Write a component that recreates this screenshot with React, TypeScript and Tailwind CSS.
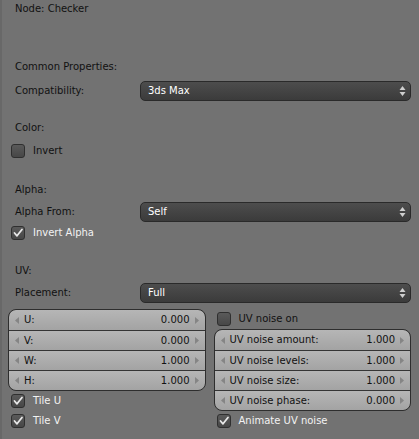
import React from "react";

const Check = ({ on }: { on: boolean }) => (
  <div className="w-[14px] h-[14px] rounded-[3px] border border-[#2f2f2f] bg-gradient-to-b from-[#5a5a5a] to-[#474747] flex items-center justify-center">
    {on && (
      <svg width="12" height="12" viewBox="0 0 12 12">
        <path d="M2.5 6 L5 8.8 L10 2.5" fill="none" stroke="#e8e8e8" strokeWidth="1.8" strokeLinecap="round" strokeLinejoin="round" />
      </svg>
    )}
  </div>
);

const Toggle = ({ label, on }: { label: string; on: boolean }) => (
  <div className="h-5 flex items-center gap-[8px] pl-[3px]">
    <Check on={on} />
    <span className={on ? "text-[#f2f2f2]" : "text-[#111]"}>{label}</span>
  </div>
);

const Label = ({ text }: { text: string }) => (
  <div className="h-5 flex items-center pl-[7px] text-[#111]">{text}</div>
);

const Dropdown = ({ label, value }: { label: string; value: string }) => (
  <div className="h-5 flex items-center">
    <div className="w-[132px] pl-[7px] text-[#111]">{label}</div>
    <div className="w-[271px] h-5 rounded-[5px] border border-[#2a2a2a] bg-gradient-to-b from-[#4d4d4d] to-[#3b3b3b] flex items-center justify-between pl-[7px] pr-[4px] text-white">
      <span>{value}</span>
      <svg width="7" height="12" viewBox="0 0 7 12">
        <path d="M3.5 1 L6.5 5 L0.5 5 Z" fill="#cfcfcf" />
        <path d="M3.5 11 L6.5 7 L0.5 7 Z" fill="#cfcfcf" />
      </svg>
    </div>
  </div>
);

const NumRow = ({ label, value, first, last }: { label: string; value: string; first?: boolean; last?: boolean }) => (
  <div
    className={`h-5 flex items-center bg-gradient-to-b from-[#b6b6b6] to-[#a3a3a3] text-[#111] pl-[6px] pr-[6px] ${
      first ? "rounded-t-[7px]" : "border-t border-[#353535]"
    } ${last ? "rounded-b-[7px]" : ""}`}
  >
    <svg width="4" height="7" viewBox="0 0 4 7" className="mr-[5px]">
      <path d="M4 0 L0 3.5 L4 7 Z" fill="#858585" />
    </svg>
    <span className="flex-1">{label}</span>
    <span>{value}</span>
    <svg width="4" height="7" viewBox="0 0 4 7" className="ml-[5px]">
      <path d="M0 0 L4 3.5 L0 7 Z" fill="#858585" />
    </svg>
  </div>
);

const NumGroup = ({ rows }: { rows: [string, string][] }) => (
  <div className="rounded-[8px] border border-[#2e2e2e] overflow-hidden">
    {rows.map(([l, v], i) => (
      <NumRow key={l} label={l} value={v} first={i === 0} last={i === rows.length - 1} />
    ))}
  </div>
);

export default function App() {
  return (
    <div
      className="w-[419px] h-[439px] bg-[#727272] border-l-2 border-[#686868] text-[10px] leading-none overflow-hidden"
      style={{ fontFamily: '"DejaVu Sans", sans-serif' }}
    >
      <div className="pl-[6px] pr-[8px]">
        <div className="h-[18px] flex items-center pl-[7px] text-[#111]">Node: Checker</div>
        <div className="mt-[39px]">
          <Label text="Common Properties:" />
        </div>
        <div className="mt-[4px]">
          <Dropdown label="Compatibility:" value="3ds Max" />
        </div>
        <div className="mt-[17px]">
          <Label text="Color:" />
        </div>
        <div className="mt-[3px]">
          <Toggle label="Invert" on={false} />
        </div>
        <div className="mt-[19px]">
          <Label text="Alpha:" />
        </div>
        <div className="mt-[2px]">
          <Dropdown label="Alpha From:" value="Self" />
        </div>
        <div className="mt-[1px]">
          <Toggle label="Invert Alpha" on={true} />
        </div>
        <div className="mt-[18px]">
          <Label text="UV:" />
        </div>
        <div className="mt-[2px]">
          <Dropdown label="Placement:" value="Full" />
        </div>
        <div className="mt-[6px] grid grid-cols-2 gap-x-[8px]">
          <div className="flex flex-col">
            <NumGroup rows={[["U:", "0.000"], ["V:", "0.000"], ["W:", "1.000"], ["H:", "1.000"]]} />
            <Toggle label="Tile U" on={true} />
            <Toggle label="Tile V" on={true} />
          </div>
          <div className="flex flex-col">
            <Toggle label="UV noise on" on={false} />
            <NumGroup
              rows={[
                ["UV noise amount:", "1.000"],
                ["UV noise levels:", "1.000"],
                ["UV noise size:", "1.000"],
                ["UV noise phase:", "0.000"],
              ]}
            />
            <Toggle label="Animate UV noise" on={true} />
          </div>
        </div>
      </div>
    </div>
  );
}
